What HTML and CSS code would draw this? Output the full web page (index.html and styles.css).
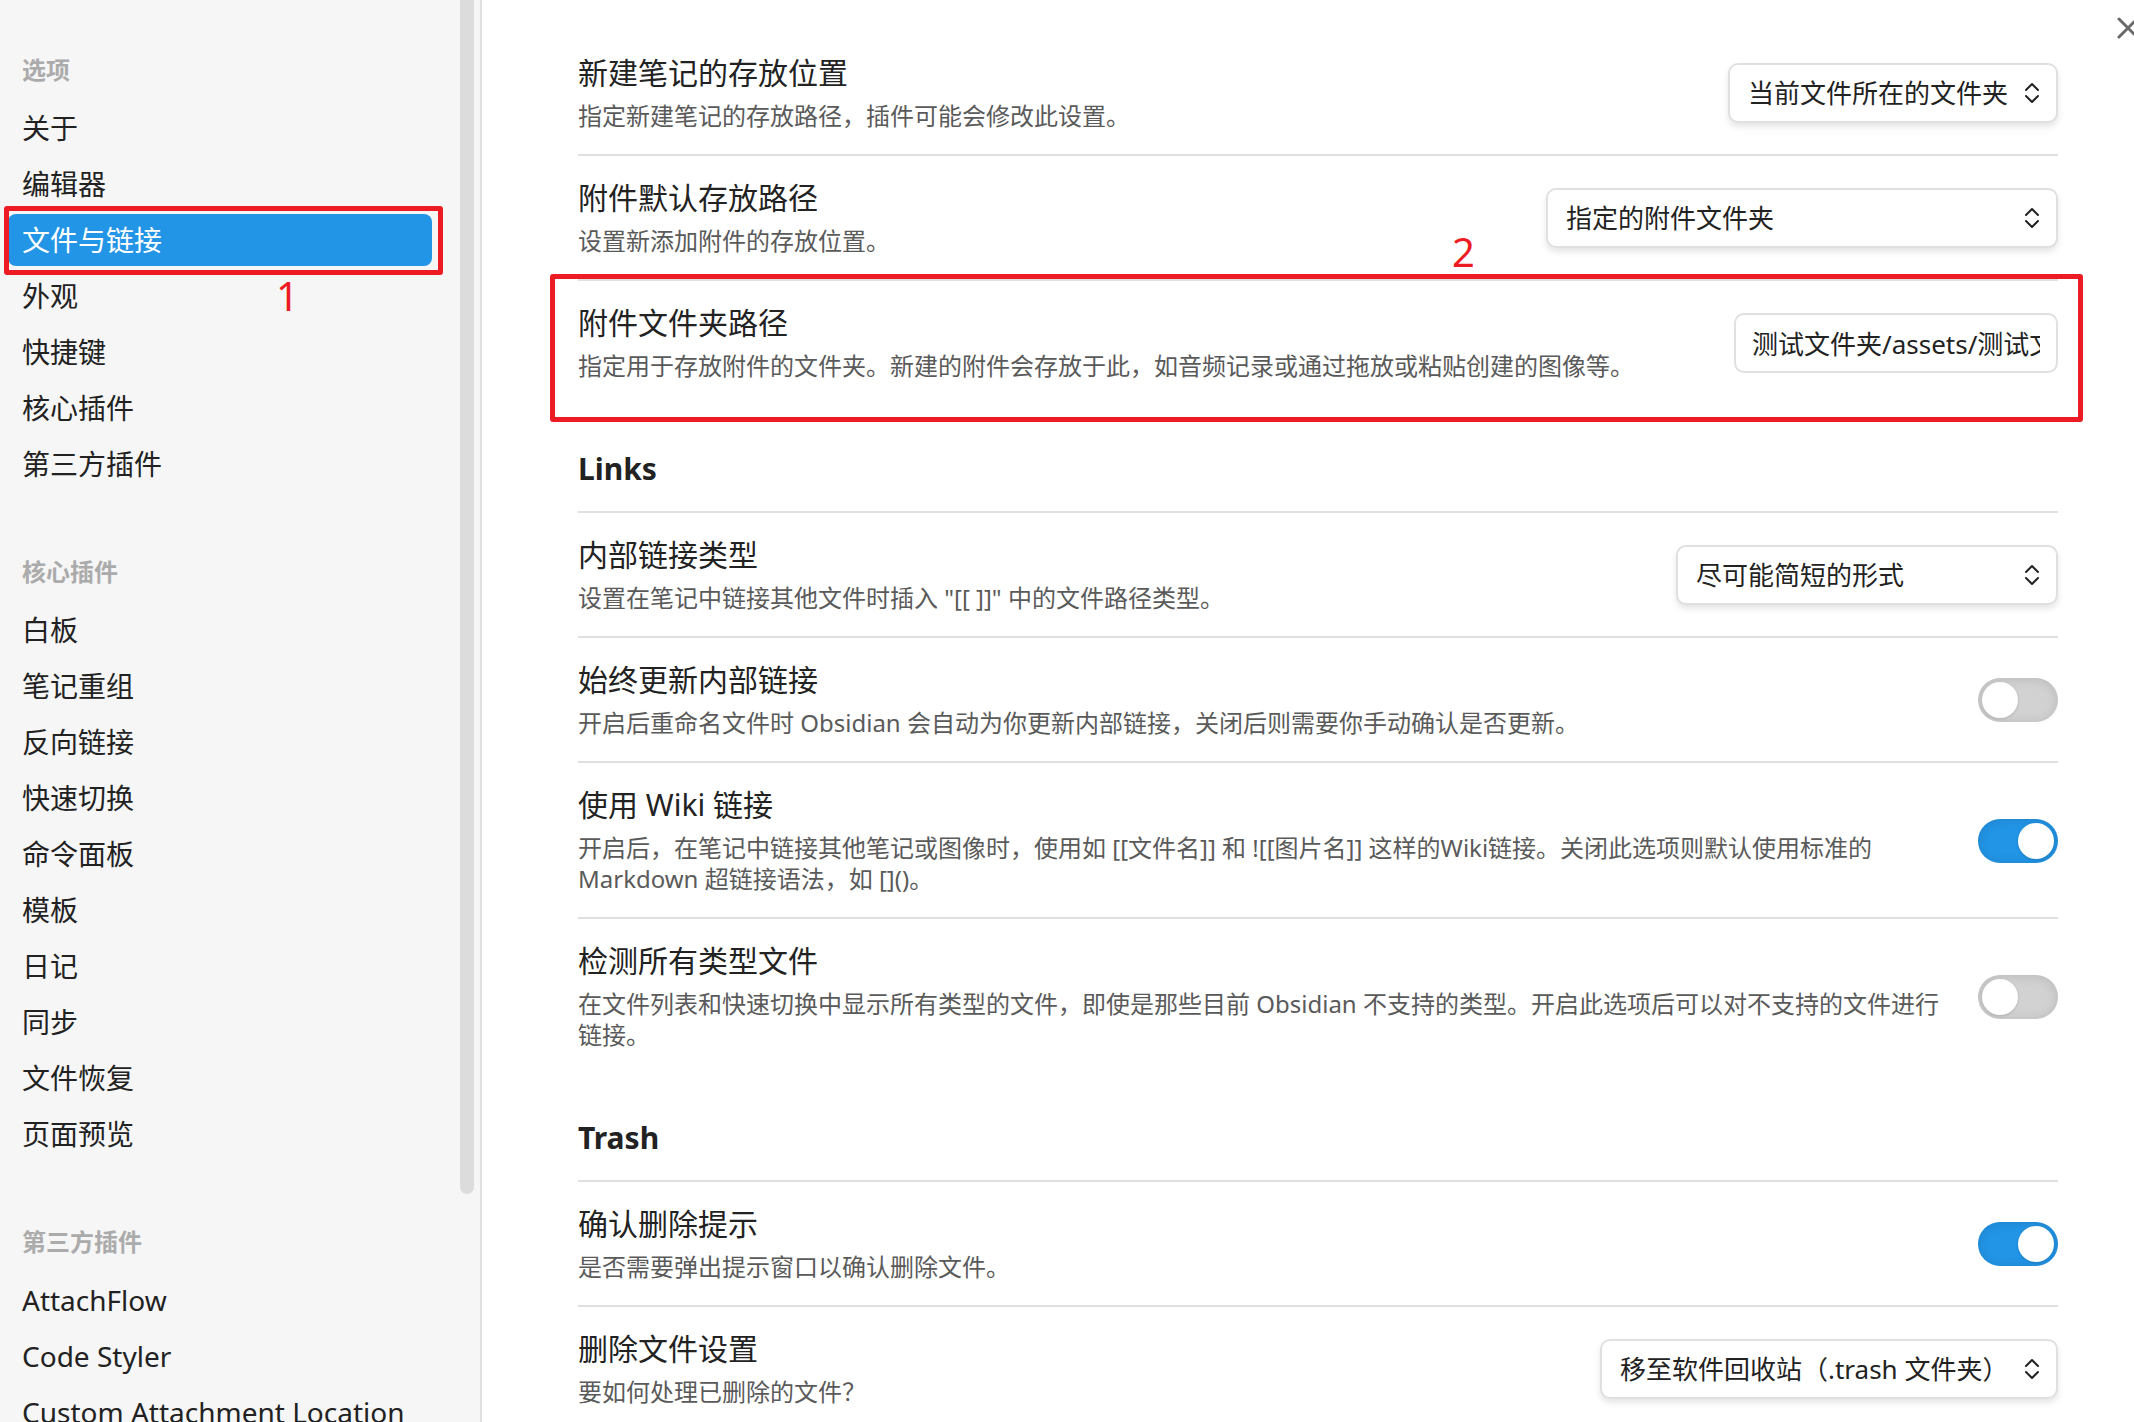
FILE: index.html
```html
<!DOCTYPE html>
<html lang="zh-CN">
<head>
    <meta charset="UTF-8">
    <title>文件与链接</title>
    <link rel="stylesheet" href="styles.css">
</head>
<body>
<div class="settings">
    <aside class="sidebar">
        <nav class="group">
            <h2 class="group-title">选项</h2>
            <a class="nav-item" href="#">关于</a>
            <a class="nav-item" href="#">编辑器</a>
            <a class="nav-item active" href="#">文件与链接<span class="mark mark-nav"></span><span class="mark-number number-nav">1</span></a>
            <a class="nav-item" href="#">外观</a>
            <a class="nav-item" href="#">快捷键</a>
            <a class="nav-item" href="#">核心插件</a>
            <a class="nav-item" href="#">第三方插件</a>
        </nav>
        <nav class="group">
            <h2 class="group-title">核心插件</h2>
            <a class="nav-item" href="#">白板</a>
            <a class="nav-item" href="#">笔记重组</a>
            <a class="nav-item" href="#">反向链接</a>
            <a class="nav-item" href="#">快速切换</a>
            <a class="nav-item" href="#">命令面板</a>
            <a class="nav-item" href="#">模板</a>
            <a class="nav-item" href="#">日记</a>
            <a class="nav-item" href="#">同步</a>
            <a class="nav-item" href="#">文件恢复</a>
            <a class="nav-item" href="#">页面预览</a>
        </nav>
        <nav class="group">
            <h2 class="group-title">第三方插件</h2>
            <a class="nav-item" href="#">AttachFlow</a>
            <a class="nav-item" href="#">Code Styler</a>
            <a class="nav-item" href="#">Custom Attachment Location</a>
        </nav>
        <div class="scroll-thumb"></div>
    </aside>

    <main class="content">
        <button class="close" type="button" aria-label="关闭">
            <svg width="24" height="24" viewBox="0 0 24 24"><path d="M3 3l18 18M21 3L3 21"/></svg>
        </button>

        <div class="row">
            <div class="info">
                <label class="name" for="new-note">新建笔记的存放位置</label>
                <div class="desc">指定新建笔记的存放路径，插件可能会修改此设置。</div>
            </div>
            <div class="dropdown location">
                <select id="new-note"><option>当前文件所在的文件夹</option></select>
                <svg width="16" height="22" viewBox="0 0 16 22"><path d="M2 8l6-6 6 6M2 14l6 6 6-6"/></svg>
            </div>
        </div>

        <div class="row">
            <div class="info">
                <label class="name" for="attachment">附件默认存放路径</label>
                <div class="desc">设置新添加附件的存放位置。</div>
            </div>
            <div class="dropdown attachment">
                <select id="attachment"><option>指定的附件文件夹</option></select>
                <svg width="16" height="22" viewBox="0 0 16 22"><path d="M2 8l6-6 6 6M2 14l6 6 6-6"/></svg>
            </div>
        </div>

        <div class="row">
            <div class="info">
                <label class="name" for="folder">附件文件夹路径</label>
                <div class="desc">指定用于存放附件的文件夹。新建的附件会存放于此，如音频记录或通过拖放或粘贴创建的图像等。</div>
            </div>
            <input class="text" id="folder" type="text" value="测试文件夹/assets/测试文件夹">
            <span class="mark mark-row"></span>
            <span class="mark-number number-row">2</span>
        </div>

        <h3 class="heading">Links</h3>

        <div class="row">
            <div class="info">
                <label class="name" for="link-type">内部链接类型</label>
                <div class="desc">设置在笔记中链接其他文件时插入 "[[ ]]" 中的文件路径类型。</div>
            </div>
            <div class="dropdown link-type">
                <select id="link-type"><option>尽可能简短的形式</option></select>
                <svg width="16" height="22" viewBox="0 0 16 22"><path d="M2 8l6-6 6 6M2 14l6 6 6-6"/></svg>
            </div>
        </div>

        <div class="row">
            <div class="info">
                <label class="name" for="update-links">始终更新内部链接</label>
                <div class="desc">开启后重命名文件时 Obsidian 会自动为你更新内部链接，关闭后则需要你手动确认是否更新。</div>
            </div>
            <input class="toggle" id="update-links" type="checkbox">
        </div>

        <div class="row">
            <div class="info">
                <label class="name" for="wiki">使用 Wiki 链接</label>
                <div class="desc">开启后，在笔记中链接其他笔记或图像时，使用如 [[文件名]] 和 ![[图片名]] 这样的Wiki链接。关闭此选项则默认使用标准的 Markdown 超链接语法，如 []()。</div>
            </div>
            <input class="toggle" id="wiki" type="checkbox" checked>
        </div>

        <div class="row">
            <div class="info">
                <label class="name" for="all-types">检测所有类型文件</label>
                <div class="desc">在文件列表和快速切换中显示所有类型的文件，即使是那些目前 Obsidian 不支持的类型。开启此选项后可以对不支持的文件进行链接。</div>
            </div>
            <input class="toggle" id="all-types" type="checkbox">
        </div>

        <h3 class="heading">Trash</h3>

        <div class="row">
            <div class="info">
                <label class="name" for="confirm">确认删除提示</label>
                <div class="desc">是否需要弹出提示窗口以确认删除文件。</div>
            </div>
            <input class="toggle" id="confirm" type="checkbox" checked>
        </div>

        <div class="row">
            <div class="info">
                <label class="name" for="trash">删除文件设置</label>
                <div class="desc">要如何处理已删除的文件？</div>
            </div>
            <div class="dropdown trash">
                <select id="trash"><option>移至软件回收站（.trash 文件夹）</option></select>
                <svg width="16" height="22" viewBox="0 0 16 22"><path d="M2 8l6-6 6 6M2 14l6 6 6-6"/></svg>
            </div>
        </div>
    </main>
</div>
</body>
</html>
```

FILE: styles.css
```css
* {
    box-sizing: border-box;
}

body {
    margin: 0;
    color: #222222;
    background-color: #ffffff;
    font-family: "Noto Sans", "Noto Sans CJK SC", sans-serif;
    font-size: 26px;
}

input, select, button {
    margin: 0;
    color: inherit;
    font: inherit;
}

.settings {
    display: flex;
    height: 100vh;
    overflow: hidden;
}

/* sidebar */
.sidebar {
    position: relative;
    flex: 0 0 482px;
    padding: 54px 48px 0 8px;
    overflow: hidden;
    background-color: #f6f6f6;
    border-right: 2px solid #e0e0e0;
}

.group {
    display: flex;
    flex-direction: column;
    gap: 4px;
    margin-bottom: 66px;
}

.group-title {
    margin: 0 0 12px;
    padding-left: 14px;
    color: #ababab;
    font-size: 24px;
    line-height: 32px;
}

.nav-item {
    position: relative;
    padding: 0 14px;
    border-radius: 8px;
    color: inherit;
    font-size: 28px;
    line-height: 52px;
    text-decoration: none;
    white-space: nowrap;
}

.nav-item.active {
    color: #ffffff;
    background-color: #2295e6;
}

.scroll-thumb {
    position: absolute;
    top: 0;
    right: 6px;
    width: 14px;
    height: 84%;
    border-radius: 0 0 7px 7px;
    background-color: #dcdcdc;
}

/* settings list */
.content {
    position: relative;
    flex: 1;
    min-width: 0;
    padding: 29px 76px 0 96px;
    overflow: hidden;
}

.close {
    position: absolute;
    top: 16px;
    right: -6px;
    width: 24px;
    height: 24px;
    padding: 0;
    border: 0;
    background: none;
}

.close svg {
    display: block;
    fill: none;
    stroke: #6a6a6a;
    stroke-width: 3;
    stroke-linecap: round;
}

.row {
    position: relative;
    display: flex;
    align-items: center;
    gap: 32px;
    padding: 23px 0 22px;
    border-top: 2px solid #e0e0e0;
}

.row:first-of-type {
    border-color: transparent;
}

.info {
    flex: 1;
}

.name {
    display: block;
    font-size: 30px;
    line-height: 38px;
}

.desc {
    padding: 8px 0 1px;
    color: #5a5a5a;
    font-size: 24px;
    line-height: 31px;
}

.heading {
    margin: 0;
    padding: 45px 0 23px;
    font-size: 30px;
    line-height: 39px;
}

/* controls */
.dropdown {
    position: relative;
}

.dropdown select {
    display: block;
    width: 100%;
    height: 60px;
    padding: 0 48px 0 18px;
    appearance: none;
    border: 2px solid #e0e0e0;
    border-radius: 10px;
    background-color: #ffffff;
    box-shadow: 0 4px 6px rgba(0, 0, 0, 0.1);
}

.dropdown svg {
    position: absolute;
    top: 19px;
    right: 18px;
    fill: none;
    stroke: #222222;
    stroke-width: 2;
    stroke-linecap: round;
    stroke-linejoin: round;
    pointer-events: none;
}

.location {
    width: 330px;
}

.attachment {
    width: 512px;
}

.link-type {
    width: 382px;
}

.trash {
    width: 458px;
}

.text {
    width: 324px;
    height: 60px;
    padding: 0 16px;
    border: 2px solid #e0e0e0;
    border-radius: 10px;
    background-color: #ffffff;
}

.toggle {
    display: flex;
    align-items: center;
    width: 80px;
    height: 44px;
    padding: 0 4px;
    appearance: none;
    border-radius: 22px;
    background-color: #d2d2d2;
    box-shadow: inset 0 1px 12px rgba(0, 0, 0, 0.12);
}

.toggle::before {
    content: "";
    width: 36px;
    height: 36px;
    border-radius: 50%;
    background-color: #ffffff;
    box-shadow: 0 1px 3px rgba(0, 0, 0, 0.15);
}

.toggle:checked {
    justify-content: flex-end;
    background-color: #2295e6;
}

/* red step marks */
.mark {
    position: absolute;
    border: 5px solid #ed1c24;
    border-radius: 3px;
    pointer-events: none;
}

.mark-nav {
    inset: -8px -11px -9px -4px;
}

.mark-row {
    inset: -7px -25px -18px -28px;
}

.mark-number {
    position: absolute;
    color: #ed1c24;
    font-size: 40px;
    line-height: 40px;
}

.number-nav {
    top: 62px;
    left: 268px;
}

.number-row {
    top: -49px;
    right: 583px;
}
```
